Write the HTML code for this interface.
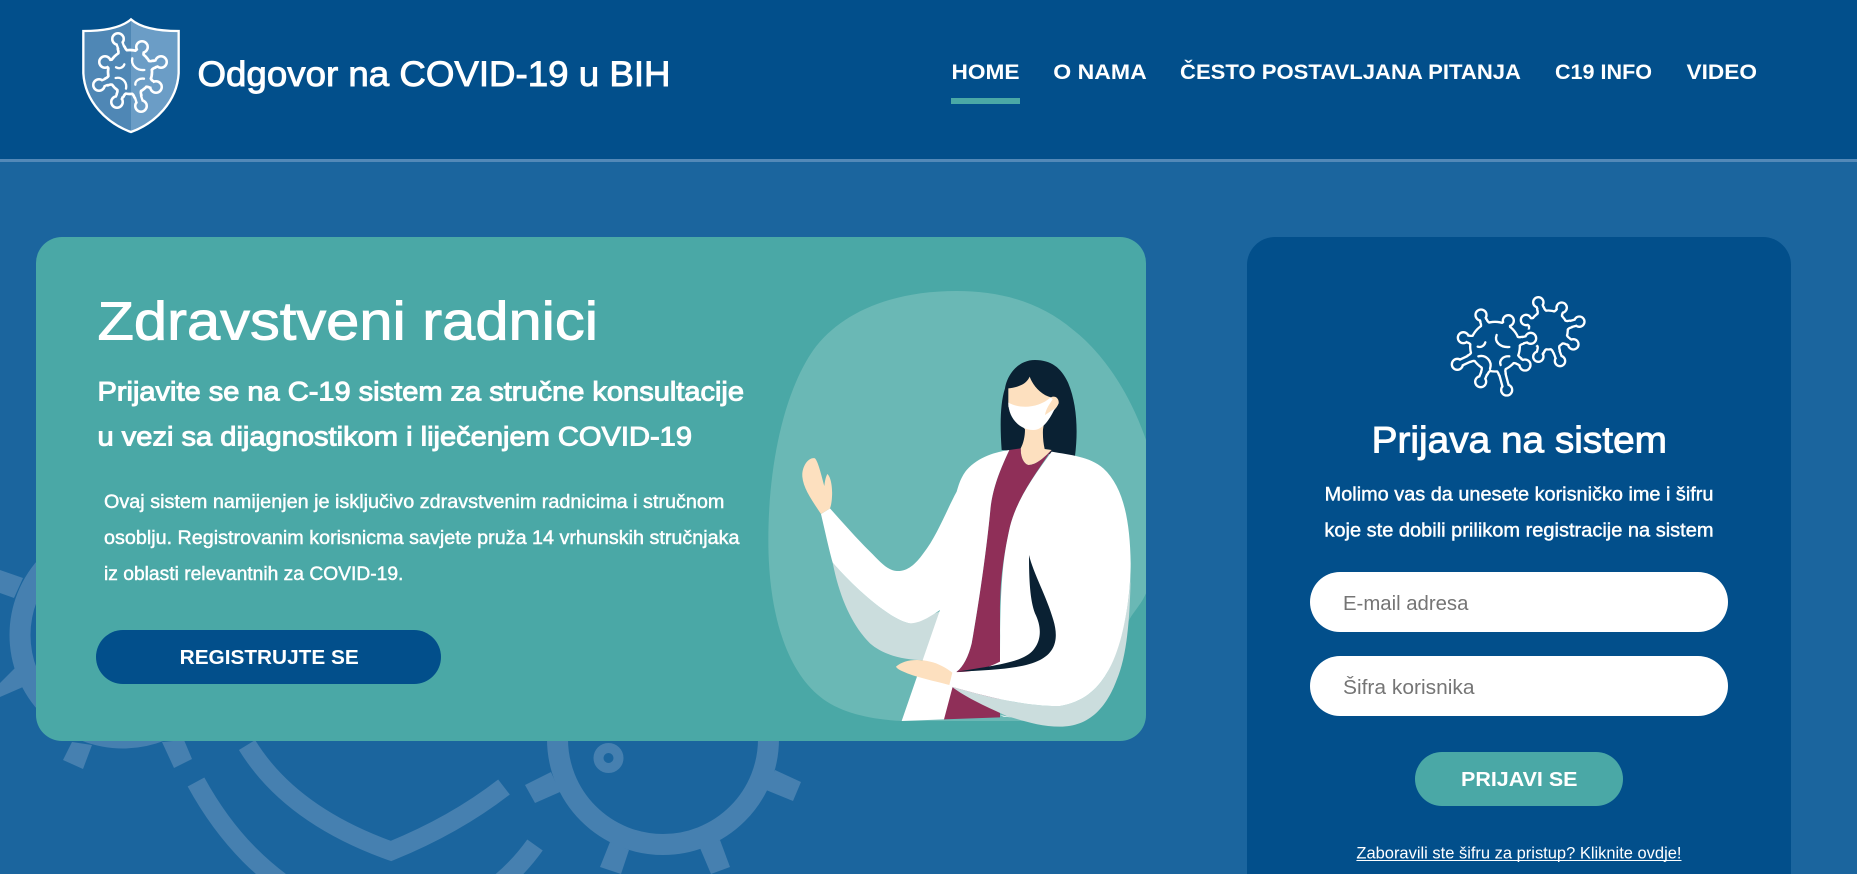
<!DOCTYPE html>
<html lang="bs">
<head>
<meta charset="utf-8">
<title>Odgovor na COVID-19 u BIH</title>
<style>
html,body{margin:0;padding:0;width:1857px;height:874px;overflow:hidden;background:#1b659e}
svg{display:block}
text{font-family:"Liberation Sans",sans-serif;fill:#fff}
.md{stroke:#fff;stroke-width:.9px}
.sb{stroke:#fff;stroke-width:1px}
.rm{stroke:#fff;stroke-width:.45px}
.ph{fill:#757575}
.ln{fill:none;stroke-linecap:round;stroke-linejoin:round}
</style>
</head>
<body>
<svg xmlns="http://www.w3.org/2000/svg" width="1857" height="874" viewBox="0 0 1857 874">
<defs>
  <path id="fl" d="M-20 8C-10 2-7-4-7-14L7-14C7-4 10 2 20 8Z"/>

  <!-- shield virus -->
  <path id="sn" d="M180 186L144 87M180 186L216 111M180 186L273 156M180 186L258 231M180 186L213 288M180 186L141 276M180 186L87 225M180 186L105 156"/>
  <path id="sk" d="M144 87h.01M216 111h.01M273 156h.01M258 231h.01M213 288h.01M141 276h.01M87 225h.01M105 156h.01"/>
  <path id="sb" d="M180 186h.01"/>
  <g id="sf">
    <use href="#fl" transform="translate(180 186) rotate(-20) translate(0 -62)"/>
    <use href="#fl" transform="translate(180 186) rotate(26) translate(0 -62)"/>
    <use href="#fl" transform="translate(180 186) rotate(72) translate(0 -62)"/>
    <use href="#fl" transform="translate(180 186) rotate(120) translate(0 -62)"/>
    <use href="#fl" transform="translate(180 186) rotate(162) translate(0 -62)"/>
    <use href="#fl" transform="translate(180 186) rotate(203) translate(0 -62)"/>
    <use href="#fl" transform="translate(180 186) rotate(247) translate(0 -62)"/>
    <use href="#fl" transform="translate(180 186) rotate(-68) translate(0 -62)"/>
  </g>
  <mask id="shm" maskUnits="userSpaceOnUse" x="0" y="0" width="400" height="400">
    <g class="ln" stroke="#fff">
      <use href="#sn" stroke-width="26"/><use href="#sk" stroke-width="42"/><use href="#sb" stroke-width="140"/>
      <use href="#sf" fill="#fff" stroke-width="16"/>
    </g>
    <g class="ln" stroke="#000">
      <use href="#sn" stroke-width="12"/><use href="#sk" stroke-width="27"/><use href="#sb" stroke-width="124"/>
      <use href="#sf" fill="#000" stroke="none"/>
    </g>
  </mask>
  <clipPath id="shr"><rect x="183" y="0" width="200" height="400"/></clipPath>

  <!-- login big virus -->
  <path id="bn" d="M165 185L123 90M165 185L205 107M165 185L272 160M165 185L255 240M165 185L200 315M165 185L122 290M165 185L52 238M165 185L70 158"/>
  <path id="bk" d="M123 90h.01M205 107h.01M272 160h.01M255 240h.01M200 315h.01M122 290h.01M52 238h.01M70 158h.01"/>
  <path id="bb" d="M165 185h.01"/>
  <g id="bf">
    <use href="#fl" transform="translate(165 185) rotate(-24) translate(0 -71)"/>
    <use href="#fl" transform="translate(165 185) rotate(27) translate(0 -71)"/>
    <use href="#fl" transform="translate(165 185) rotate(77) translate(0 -71)"/>
    <use href="#fl" transform="translate(165 185) rotate(121) translate(0 -71)"/>
    <use href="#fl" transform="translate(165 185) rotate(165) translate(0 -71)"/>
    <use href="#fl" transform="translate(165 185) rotate(202) translate(0 -71)"/>
    <use href="#fl" transform="translate(165 185) rotate(245) translate(0 -71)"/>
    <use href="#fl" transform="translate(165 185) rotate(-74) translate(0 -71)"/>
  </g>
  <!-- login small virus -->
  <path id="cn" d="M325 135L295 52M325 135L365 68M325 135L418 110M325 135L400 178M325 135L360 228M325 135L295 215M325 135L258 105"/>
  <path id="ck" d="M295 52h.01M365 68h.01M418 110h.01M400 178h.01M360 228h.01M295 215h.01M258 105h.01"/>
  <path id="cb" d="M325 135h.01"/>
  <g id="cf">
    <use href="#fl" transform="translate(325 135) rotate(-20) translate(0 -55)"/>
    <use href="#fl" transform="translate(325 135) rotate(31) translate(0 -55)"/>
    <use href="#fl" transform="translate(325 135) rotate(75) translate(0 -55)"/>
    <use href="#fl" transform="translate(325 135) rotate(120) translate(0 -55)"/>
    <use href="#fl" transform="translate(325 135) rotate(159) translate(0 -55)"/>
    <use href="#fl" transform="translate(325 135) rotate(200) translate(0 -55)"/>
    <use href="#fl" transform="translate(325 135) rotate(-66) translate(0 -55)"/>
  </g>
  <clipPath id="card"><rect x="36" y="237" width="1110" height="504" rx="26"/></clipPath>
  <clipPath id="page"><rect width="1857" height="874"/></clipPath>
</defs>

<!-- page background -->
<rect width="1857" height="874" fill="#1b659e"/>

<!-- background decoration -->
<g clip-path="url(#page)">
<g fill="none" stroke="#4680b0">
  <circle cx="123" cy="635" r="103" stroke-width="21"/>
  <circle cx="663" cy="739" r="105.5" stroke-width="21"/>
  <circle cx="608.5" cy="758" r="10" stroke-width="10"/>
  <path d="M247 745Q290 815 391 851Q455 825 504 787" stroke-width="19"/>
  <path d="M196 782C225 835 265 880 330 912" stroke-width="19"/>
  <path d="M535 845Q510 880 475 900" stroke-width="19"/>
</g>
<g fill="#4680b0">
  <polygon points="72,742 92,745 83,769 63,760"/>
  <polygon points="162,742 184,740 192,759 174,768"/>
  <polygon points="0,570 23,578 14,598 0,593"/>
  <polygon points="0,683 16,667 23,687 0,697"/>
  <polygon points="525,785 551,772 560,792 535,803"/>
  <polygon points="775,770 801,782 793,801 766,790"/>
  <polygon points="610,842 629,850 621,874 600,867"/>
  <polygon points="700,848 720,840 730,867 711,874"/>
</g>
</g>

<!-- header -->
<rect width="1857" height="159" fill="#024f8b"/>
<rect y="159" width="1857" height="3" fill="#5389b8"/>

<!-- logo -->
<g transform="translate(70 10) scale(.33333)">
  <path d="M183 28C160 48 115 63 40 63L40 190C45 275 110 340 183 366C256 340 321 275 326 190L326 63C251 63 206 48 183 28Z" fill="#4f87b5"/>
  <path clip-path="url(#shr)" d="M183 28C160 48 115 63 40 63L40 190C45 275 110 340 183 366C256 340 321 275 326 190L326 63C251 63 206 48 183 28Z" fill="#6b9dc6"/>
  <path d="M183 28C160 48 115 63 40 63L40 190C45 275 110 340 183 366C256 340 321 275 326 190L326 63C251 63 206 48 183 28Z" fill="none" stroke="#fff" stroke-width="7"/>
  <rect width="400" height="400" fill="#fff" mask="url(#shm)"/>
  <g class="ln" stroke="#fff" stroke-width="7">
    <path d="M187 145C182 165 200 182 223 180"/>
    <path d="M138 172C150 178 160 172 163 163"/>
    <path d="M137 204C155 200 172 215 168 236"/>
    <path d="M196 224C195 212 208 204 222 206"/>
  </g>
</g>
<text x="197.5" y="86" font-size="35" textLength="473" lengthAdjust="spacingAndGlyphs" class="md">Odgovor na COVID-19 u BIH</text>

<!-- nav -->
<text x="951.5" y="79" font-size="21" font-weight="700" textLength="68" lengthAdjust="spacingAndGlyphs">HOME</text>
<text x="1053.3" y="79" font-size="21" font-weight="700" textLength="93.5" lengthAdjust="spacingAndGlyphs">O NAMA</text>
<text x="1180" y="79" font-size="21" font-weight="700" textLength="341" lengthAdjust="spacingAndGlyphs">ČESTO POSTAVLJANA PITANJA</text>
<text x="1555" y="79" font-size="21" font-weight="700" textLength="97" lengthAdjust="spacingAndGlyphs">C19 INFO</text>
<text x="1686.5" y="79" font-size="21" font-weight="700" textLength="70.5" lengthAdjust="spacingAndGlyphs">VIDEO</text>
<rect x="951" y="98" width="69" height="6" fill="#4aa8a6"/>

<!-- hero card -->
<rect x="36" y="237" width="1110" height="504" rx="26" fill="#4aa8a6"/>

<!-- illustration -->
<g clip-path="url(#card)">
<g transform="translate(740 280) scale(.33333)">
  <path fill="#6ab8b5" d="M650 33C450 33 300 100 220 210C130 340 85 560 85 780C85 1000 140 1170 240 1250C300 1300 400 1320 490 1323L1000 1323L1170 1015C1185 990 1205 970 1218 940L1218 480C1170 340 1090 220 1000 150C900 65 780 33 650 33Z"/>
  <path fill="#0a2133" d="M885 240C830 240 800 290 795 325C780 370 780 440 785 510L1005 528C1015 450 1010 370 985 310C965 265 935 240 885 240Z"/>
  <path fill="#fde0bf" d="M805 325C835 322 860 312 869 290C880 320 905 345 933 352C945 345 958 355 956 370C950 385 935 400 916 405L909 448C908 470 910 490 914 507L935 510C915 530 890 555 865 555C850 550 842 530 842 505C850 490 855 470 855 448L805 380Z"/>
  <path fill="#fff" d="M805 368C840 387 895 385 932 352L938 358C930 370 918 385 915 405L945 385C930 415 910 450 880 450C840 450 805 415 805 368Z"/>
  <path fill="#cbdddd" d="M278 848C300 960 340 1040 390 1090C430 1125 490 1140 550 1140L610 990L510 1030C450 1020 340 920 278 848Z"/>
  <path fill="#8f2f58" d="M808 510L842 505C842 530 850 550 865 555C890 555 915 530 935 510C880 590 830 660 810 740C790 830 780 900 780 1000L780 1312L610 1318L650 1175C670 1160 685 1130 695 1090C720 950 740 800 750 700C755 640 770 590 808 510Z"/>
  <path fill="#fff" d="M808 510C770 515 715 530 680 570C660 595 655 620 650 635C620 690 590 770 550 820C525 855 500 875 470 873C440 870 420 845 390 815C350 775 310 730 270 685L243 702C252 740 265 800 278 848C340 920 450 1020 510 1030C540 1030 570 1010 600 990L485 1323L612 1318L650 1175C670 1160 685 1130 695 1090C720 950 740 800 750 700C755 640 770 590 808 510Z"/>
  <path fill="#cbdddd" d="M635 1220C770 1260 880 1280 960 1278C1030 1265 1070 1230 1100 1180C1140 1110 1165 1000 1172 885C1170 1020 1160 1130 1130 1200C1100 1280 1050 1340 960 1340C900 1340 850 1322 800 1308C750 1285 680 1255 635 1220Z"/>
  <path fill="#fff" d="M780 1305L815 1312L790 1310Z"/>
  <path fill="#fff" d="M935 515C990 525 1050 530 1090 565C1150 620 1170 720 1172 850C1172 950 1150 1100 1100 1180C1070 1230 1030 1265 960 1278C880 1280 770 1260 628 1218L638 1176C700 1178 740 1165 780 1145C780 900 790 830 810 740C830 660 880 590 935 515Z"/>
  <path fill="#0a2133" d="M867 825C867 900 870 960 885 1000C905 1040 905 1080 880 1110C850 1145 780 1155 650 1175C770 1170 850 1165 900 1140C950 1115 955 1070 940 1020C920 950 880 880 867 825Z"/>
  <path fill="#fde0bf" d="M243 702C215 660 190 625 187 590C185 560 205 530 225 535C235 545 245 590 253 618C255 600 258 590 262 582C272 590 278 620 276 650C275 670 272 680 270 685Z"/>
  <path fill="#fde0bf" d="M468 1160C490 1140 530 1135 570 1145C595 1150 620 1165 637 1178L628 1215C590 1205 520 1190 490 1175C478 1170 470 1165 468 1160Z"/>
</g>
</g>

<!-- hero text -->
<text x="97.5" y="339.5" font-size="54" textLength="500.5" lengthAdjust="spacingAndGlyphs" class="md">Zdravstveni radnici</text>
<text x="97.5" y="400.7" font-size="27" textLength="646.5" lengthAdjust="spacingAndGlyphs" class="sb">Prijavite se na C-19 sistem za stručne konsultacije</text>
<text x="97.5" y="445.7" font-size="27" textLength="594.5" lengthAdjust="spacingAndGlyphs" class="sb">u vezi sa dijagnostikom i liječenjem COVID-19</text>
<text x="104" y="508" font-size="19.5" textLength="620.4" lengthAdjust="spacingAndGlyphs" class="rm">Ovaj sistem namijenjen je isključivo zdravstvenim radnicima i stručnom</text>
<text x="104" y="544" font-size="19.5" textLength="635.5" lengthAdjust="spacingAndGlyphs" class="rm">osoblju. Registrovanim korisnicma savjete pruža 14 vrhunskih stručnjaka</text>
<text x="104" y="580" font-size="19.5" textLength="299.4" lengthAdjust="spacingAndGlyphs" class="rm">iz oblasti relevantnih za COVID-19.</text>
<rect x="96" y="630" width="345" height="54" rx="27" fill="#024f8b"/>
<text x="179.7" y="664" font-size="20" font-weight="700" textLength="179" lengthAdjust="spacingAndGlyphs">REGISTRUJTE SE</text>

<!-- login panel -->
<path d="M1247 874V265A28 28 0 0 1 1275 237H1763A28 28 0 0 1 1791 265V874Z" fill="#024f8b"/>
<g transform="translate(1440 285) scale(.33333)">
  <g class="ln" stroke="#fff">
    <use href="#cn" stroke-width="26"/><use href="#ck" stroke-width="38"/><use href="#cb" stroke-width="124"/>
    <use href="#cf" fill="#fff" stroke-width="14"/>
  </g>
  <g class="ln" stroke="#024f8b">
    <use href="#cn" stroke-width="12"/><use href="#ck" stroke-width="24"/><use href="#cb" stroke-width="110"/>
    <use href="#cf" fill="#024f8b" stroke="none"/>
  </g>
  <g class="ln" stroke="#024f8b">
    <use href="#bn" stroke-width="40"/><use href="#bk" stroke-width="54"/><use href="#bb" stroke-width="170"/>
    <use href="#bf" fill="#024f8b" stroke-width="28"/>
  </g>
  <g class="ln" stroke="#fff">
    <use href="#bn" stroke-width="26"/><use href="#bk" stroke-width="40"/><use href="#bb" stroke-width="156"/>
    <use href="#bf" fill="#fff" stroke-width="14"/>
  </g>
  <g class="ln" stroke="#024f8b">
    <use href="#bn" stroke-width="12"/><use href="#bk" stroke-width="26"/><use href="#bb" stroke-width="142"/>
    <use href="#bf" fill="#024f8b" stroke="none"/>
  </g>
  <g class="ln" stroke="#fff" stroke-width="7">
    <path d="M170 150C162 170 180 188 208 186"/>
    <path d="M113 185C122 188 132 184 136 172"/>
    <path d="M115 214C138 208 158 228 150 252"/>
    <path d="M182 240C176 226 190 212 208 214"/>
  </g>
</g>
<text x="1371.6" y="452.7" font-size="37" textLength="295.4" lengthAdjust="spacingAndGlyphs" class="md">Prijava na sistem</text>
<text x="1324.7" y="500.7" font-size="19.5" textLength="388.8" lengthAdjust="spacingAndGlyphs" class="rm">Molimo vas da unesete korisničko ime i šifru</text>
<text x="1324.4" y="536.7" font-size="19.5" textLength="389.1" lengthAdjust="spacingAndGlyphs" class="rm">koje ste dobili prilikom registracije na sistem</text>
<rect x="1310" y="572" width="418" height="60" rx="30" fill="#fff"/>
<text x="1343" y="610" font-size="20.5" textLength="125.4" lengthAdjust="spacingAndGlyphs" class="ph">E-mail adresa</text>
<rect x="1310" y="656" width="418" height="60" rx="30" fill="#fff"/>
<text x="1343" y="694" font-size="20.5" textLength="131.5" lengthAdjust="spacingAndGlyphs" class="ph">Šifra korisnika</text>
<rect x="1415" y="752" width="208" height="54" rx="27" fill="#4aa8a6"/>
<text x="1461" y="786" font-size="20.5" font-weight="700" textLength="116.5" lengthAdjust="spacingAndGlyphs">PRIJAVI SE</text>
<text x="1356.4" y="858.7" font-size="16.5" textLength="325.1" lengthAdjust="spacingAndGlyphs">Zaboravili ste šifru za pristup? Kliknite ovdje!</text>
<rect x="1356.4" y="860" width="325.1" height="1" fill="#fff"/>
</svg>
</body>
</html>
